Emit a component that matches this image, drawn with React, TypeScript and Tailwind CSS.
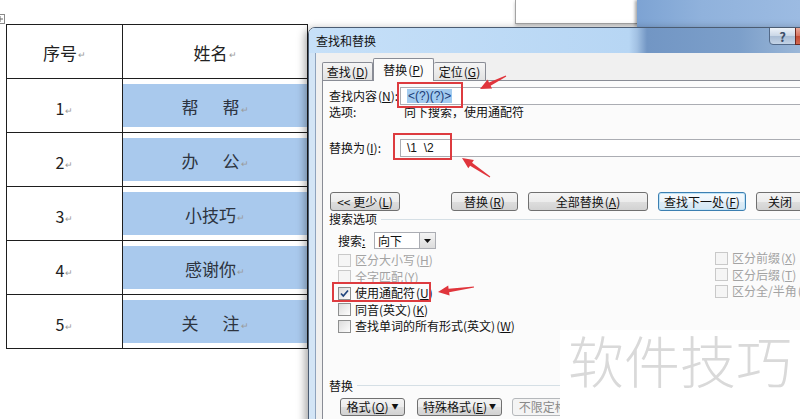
import React from 'react';

// Word 文档表格 + “查找和替换”对话框

const rows = [
  { n: '1', name: ['帮', '帮'] },
  { n: '2', name: ['办', '公'] },
  { n: '3', name: ['小技巧'] },
  { n: '4', name: ['感谢你'] },
  { n: '5', name: ['关', '注'] },
];

function Mark() {
  return <span className="ml-[1px] mt-[4px] text-[9px] leading-none text-[#9a9a9a]">↵</span>;
}

function Acc({ k }: { k: string }) {
  return (
    <span className="ml-[1px]">
      (<span className="underline">{k}</span>)
    </span>
  );
}

function Btn({
  children,
  w,
  focused,
  disabled,
}: {
  children: React.ReactNode;
  w: string;
  focused?: boolean;
  disabled?: boolean;
}) {
  let look =
    'border-[#707070] bg-[linear-gradient(#f4f4f4_0%,#ececec_50%,#dedede_51%,#d2d2d2_100%)] text-[#111]';
  if (focused)
    look =
      'border-[#3c7fb1] bg-[linear-gradient(#f6fafd_0%,#edf5fb_50%,#dfedf7_51%,#d3e6f3_100%)] text-[#111] shadow-[inset_0_0_0_1px_#bfe3f7]';
  if (disabled) look = 'border-[#b5b8bb] bg-[#f4f4f4] text-[#8a8a8a]';
  return (
    <div
      className={`flex h-full shrink-0 items-center justify-center whitespace-nowrap rounded-[3px] border ${look} ${w}`}
    >
      {children}
    </div>
  );
}

function Check({
  label,
  k,
  checked,
  disabled,
}: {
  label: string;
  k: string;
  checked?: boolean;
  disabled?: boolean;
}) {
  return (
    <div className="flex h-[16.5px] items-center gap-[4px] whitespace-nowrap">
      <span
        className={`flex h-[13px] w-[13px] shrink-0 items-center justify-center border ${
          disabled
            ? 'border-[#c9c9c9] bg-[#f5f5f5]'
            : 'border-[#8e8f8f] bg-[linear-gradient(135deg,#dcdcdc,#fdfdfd)]'
        }`}
      >
        {checked && (
          <svg width="11" height="11" viewBox="0 0 11 11">
            <path d="M2 5.5 L4.3 8 L9 2.5" fill="none" stroke="#21457e" strokeWidth="1.7" />
          </svg>
        )}
      </span>
      <span className={disabled ? 'text-[#a3a3a3]' : 'text-[#111]'}>
        {label}
        <Acc k={k} />
      </span>
    </div>
  );
}

function arrow(tx: number, ty: number, hx: number, hy: number) {
  const dx = hx - tx;
  const dy = hy - ty;
  const L = Math.hypot(dx, dy);
  const ux = dx / L;
  const uy = dy / L;
  const nx = -uy;
  const ny = ux;
  const hl = 11;
  const hw = 5;
  const bx = hx - ux * hl;
  const by = hy - uy * hl;
  const p = [
    [tx + nx * 0.6, ty + ny * 0.6],
    [bx + nx * 1.8, by + ny * 1.8],
    [bx + nx * hw, by + ny * hw],
    [hx, hy],
    [bx - nx * hw, by - ny * hw],
    [bx - nx * 1.8, by - ny * 1.8],
    [tx - nx * 0.6, ty - ny * 0.6],
  ];
  return p.map((q) => q.map((v) => v.toFixed(1)).join(',')).join(' ');
}

export default function App() {
  return (
    <div className="relative h-[419px] w-[800px] overflow-hidden bg-white font-['Noto_Sans_CJK_SC',sans-serif]">
      {/* windows behind */}
      <div className="absolute left-[515px] top-0 h-[24px] w-[122px] border-b border-l border-[#a3a3a3] bg-white shadow-[0_2px_3px_rgba(0,0,0,0.25)]" />
      <div className="absolute left-[637px] right-0 top-0 h-[27px] bg-[linear-gradient(90deg,#7da3d3,#90b2dc_40%,#9cbbe2)] shadow-[-2px_0_3px_rgba(0,0,0,0.35)]" />

      {/* table move handle */}
      <svg className="absolute left-[-5px] top-[14px]" width="10" height="10" viewBox="0 0 10 10">
        <rect x="0.5" y="0.5" width="9" height="9" fill="#fff" stroke="#8a8a8a" />
        <path d="M5 2 V8 M2 5 H8" stroke="#666" strokeWidth="1" />
      </svg>

      {/* document table */}
      <div className="pl-[6px] pt-[24px]">
        <div className="w-[302px] border-l border-r border-t border-[#1e1e1e] text-[#222]">
          <div className="flex h-[54px] border-b border-[#1e1e1e]">
            <div className="flex w-[116px] items-center justify-center border-r border-[#1e1e1e] pt-[2px] text-[17px]">
              序号
              <Mark />
            </div>
            <div className="flex flex-1 items-center justify-center pt-[2px] text-[17px]">
              姓名
              <Mark />
            </div>
          </div>
          {rows.map((r) => (
            <div key={r.n} className="flex h-[54px] border-b border-[#1e1e1e]">
              <div className="flex w-[116px] items-center justify-center border-r border-[#1e1e1e] pt-[5px] text-[16px]">
                {r.n}
                <Mark />
              </div>
              <div className="flex-1 pt-[5px]">
                <div className="flex h-[43px] items-center justify-center bg-[#a9c9ed] pt-[3px] text-[17px] text-[#2d3440]">
                  {r.name.length === 2 ? (
                    <>
                      <span>{r.name[0]}</span>
                      <span className="inline-block w-[24px]" />
                      <span>{r.name[1]}</span>
                    </>
                  ) : (
                    <span>{r.name[0]}</span>
                  )}
                  <Mark />
                </div>
              </div>
            </div>
          ))}
        </div>
      </div>

      {/* find and replace dialog */}
      <div className="absolute left-[308px] top-[27px] flex h-[400px] w-[520px] flex-col overflow-hidden rounded-tl-[7px] border border-[#4b5c72] text-[12px] leading-none shadow-[-3px_2px_8px_rgba(0,0,0,0.35)]">
        <div className="relative flex h-[25px] shrink-0 items-center bg-[linear-gradient(90deg,#c6e0f8_0px,#b7d6f4_320px,#a2c1e3_328px,#7296c4_338px,#7c9fca_430px,#a9c2de_100%)] pl-[7px]">
          <span className="text-[#111]">查找和替换</span>
          <div className="absolute left-[460px] top-[-1px] flex h-[18px] w-[27px] items-center justify-center rounded-bl-[4px] border border-[#536a89] bg-[linear-gradient(#eef3f9,#c9d6e6_50%,#a9bcd4_51%,#c3d3e6)] text-[13px] font-bold text-[#3d4e68]">
            ?
          </div>
          <div className="absolute left-[486px] top-[-1px] h-[18px] w-[45px] border border-[#6b2a22] bg-[linear-gradient(#e9a99a,#d7705d_50%,#c24a33_51%,#d2674f)]" />
        </div>
        <div className="flex flex-1">
          <div className="w-[7px] shrink-0 border-r border-[#8ea3bd] bg-[#d3e5f6]" />
          <div className="flex flex-1 flex-col bg-[#f0f0f0] pl-[6px] pt-[5px]">
            {/* tabs */}
            <div className="flex h-[22px] items-end whitespace-nowrap">
              <div className="flex h-[18px] w-[51px] items-center justify-center rounded-t-[2px] border border-b-0 border-[#898c95] bg-[linear-gradient(#f5f5f5,#e2e2e2)] text-[#111]">
                查找<Acc k="D" />
              </div>
              <div className="relative z-10 -mb-px flex h-[23px] w-[61px] items-center justify-center rounded-t-[2px] border border-b-0 border-[#898c95] bg-[#fbfbfb] text-[#111]">
                替换<Acc k="P" />
              </div>
              <div className="flex h-[18px] w-[52px] items-center justify-center rounded-t-[2px] border border-b-0 border-l-0 border-[#898c95] bg-[linear-gradient(#f5f5f5,#e2e2e2)] text-[#111]">
                定位<Acc k="G" />
              </div>
            </div>

            {/* tab page */}
            <div className="flex-1 whitespace-nowrap border border-[#898c95] bg-[#fbfbfb] pl-[6px] text-[#111]">
              <div className="mt-[6px] flex h-[18px] items-center">
                <span className="w-[71px] shrink-0">
                  查找内容<Acc k="N" />:
                </span>
                <div className="flex h-full flex-1 items-center border border-[#abadb3] bg-white pl-[6px]">
                  <span className="bg-[#a3cbef] px-[1px] font-['Liberation_Sans',sans-serif] text-[12px] leading-[14px] text-[#1b3c78]">
                    &lt;(?)(?)&gt;
                  </span>
                </div>
              </div>
              <div className="flex h-[14px] items-center">
                <span className="w-[75px] shrink-0">选项:</span>
                <span>向下搜索，使用通配符</span>
              </div>
              <div className="mt-[20px] flex h-[18px] items-center">
                <span className="w-[71px] shrink-0">
                  替换为<Acc k="I" />:
                </span>
                <div className="flex h-full flex-1 items-center whitespace-pre border border-[#abadb3] bg-white pl-[6px] font-['Liberation_Sans',sans-serif]">
                  {'\\1  \\2'}
                </div>
              </div>

              <div className="mt-[35px] flex h-[19px] items-center pl-[1px]">
                <Btn w="w-[70px]">
                  &lt;&lt; 更少<Acc k="L" />
                </Btn>
                <div className="w-[51px] shrink-0" />
                <Btn w="w-[67px]">
                  替换<Acc k="R" />
                </Btn>
                <div className="w-[10px] shrink-0" />
                <Btn w="w-[120px]">
                  全部替换<Acc k="A" />
                </Btn>
                <div className="w-[10px] shrink-0" />
                <Btn w="w-[88px]" focused>
                  查找下一处<Acc k="F" />
                </Btn>
                <div className="w-[10px] shrink-0" />
                <Btn w="w-[48px]">关闭</Btn>
              </div>

              <div className="mt-[1px] flex h-[14px] items-center">
                <span>搜索选项</span>
                <div className="ml-[4px] flex-1 border-t border-[#d5dfe5]" />
              </div>

              <div className="mt-[6px] flex h-[17px] items-center pl-[9px]">
                <span className="w-[36px] shrink-0">
                  搜索<span className="underline">:</span>
                </span>
                <div className="flex h-full w-[62px] items-center border border-[#abadb3] bg-white">
                  <span className="flex-1 pl-[3px]">向下</span>
                  <div className="flex h-full w-[16px] items-center justify-center border-l border-[#abadb3] bg-[linear-gradient(#f4f4f4,#dcdcdc)]">
                    <svg width="7" height="4" viewBox="0 0 7 4">
                      <path d="M0 0 H7 L3.5 4 Z" fill="#111" />
                    </svg>
                  </div>
                </div>
              </div>

              <div className="mt-[3px] flex">
                <div className="w-[386px] shrink-0 pl-[9px]">
                  <Check label="区分大小写" k="H" disabled />
                  <Check label="全字匹配" k="Y" disabled />
                  <Check label="使用通配符" k="U" checked />
                  <Check label="同音(英文)" k="K" />
                  <Check label="查找单词的所有形式(英文)" k="W" />
                </div>
                <div className="-mt-[2px]">
                  <Check label="区分前缀" k="X" disabled />
                  <Check label="区分后缀" k="T" disabled />
                  <Check label="区分全/半角" k="M" disabled />
                </div>
              </div>

              <div className="mt-[44px] flex h-[14px] items-center">
                <span>替换</span>
                <div className="ml-[4px] flex-1 border-t border-[#d5dfe5]" />
              </div>
              <div className="mt-[5px] flex h-[18px] items-center pl-[11px]">
                <Btn w="w-[65px]">
                  格式<Acc k="O" />
                  <span className="ml-[3px] text-[7px]">▼</span>
                </Btn>
                <div className="w-[12px] shrink-0" />
                <Btn w="w-[85px]">
                  特殊格式<Acc k="E" />
                  <span className="ml-[2px] text-[7px]">▼</span>
                </Btn>
                <div className="w-[10px] shrink-0" />
                <Btn w="w-[90px]" disabled>
                  不限定格式<Acc k="T" />
                </Btn>
              </div>
            </div>
          </div>
        </div>
      </div>

      {/* watermark */}
      <div className="absolute bottom-0 left-[560px] right-0 top-[330px] bg-white pl-[8px] pt-[1px] text-[56px] font-light leading-none text-[#d9d9d9]">
        软件技巧
      </div>

      {/* annotations */}
      <div className="absolute left-[397px] top-[82px] h-[26px] w-[66px] border-2 border-[#dd3b3f]" />
      <div className="absolute left-[393px] top-[133px] h-[27px] w-[59px] border-2 border-[#dd3b3f]" />
      <div className="absolute left-[332px] top-[282px] h-[20px] w-[99px] border-2 border-[#dd3b3f]" />
      <svg className="pointer-events-none absolute left-0 top-0" width="800" height="419">
        <polygon points={arrow(506, 76, 480, 89)} fill="#e0353c" />
        <polygon points={arrow(490, 177, 462, 158)} fill="#e0353c" />
        <polygon points={arrow(474, 287, 438, 292)} fill="#e0353c" />
      </svg>
    </div>
  );
}
